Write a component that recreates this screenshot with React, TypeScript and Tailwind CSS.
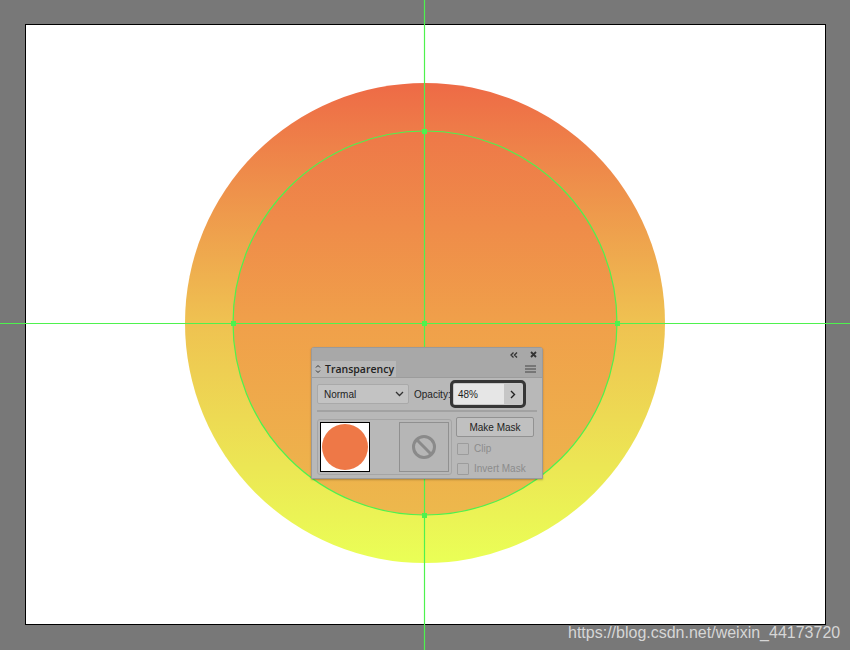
import React from "react";

const G = "#4ef24e";

function Canvas() {
  return (
    <svg className="absolute inset-0" width={850} height={650} viewBox="0 0 850 650">
      <defs>
        <linearGradient id="outer" x1="0" y1="0" x2="0" y2="1">
          <stop offset="0" stopColor="#ee6a46" />
          <stop offset="0.5" stopColor="#efc251" />
          <stop offset="1" stopColor="#eaff56" />
        </linearGradient>
        <linearGradient id="inner" x1="0" y1="0" x2="0" y2="1">
          <stop offset="0" stopColor="#ee7848" />
          <stop offset="0.5" stopColor="#f0a04a" />
          <stop offset="1" stopColor="#edb84c" />
        </linearGradient>
      </defs>
      <circle cx={425} cy={323} r={240} fill="url(#outer)" />
      <circle cx={425} cy={323} r={192} fill="url(#inner)" stroke={G} strokeWidth={1.2} />
      <line x1={424.5} y1={0} x2={424.5} y2={650} stroke={G} strokeWidth={1.2} />
      <line x1={0} y1={323.5} x2={850} y2={323.5} stroke={G} strokeWidth={1.2} />
      <rect x={422} y={321} width={5} height={5} fill={G} />
      <rect x={422} y={129} width={5} height={5} fill={G} />
      <rect x={422} y={513} width={5} height={5} fill={G} />
      <rect x={231} y={321} width={5} height={5} fill={G} />
      <rect x={615} y={321} width={5} height={5} fill={G} />
    </svg>
  );
}

function Panel() {
  const font = { fontFamily: '"Liberation Sans", Arial, sans-serif' };
  return (
    <div
      className="absolute left-[311px] top-[347px] w-[232px] bg-[#b8b8b8] border border-[#9a9a9a] rounded-t-[3px] text-[#1e1e1e] shadow-[0_1px_2px_rgba(0,0,0,0.25)]"
      style={font}
    >
      <div className="h-[13px] bg-[#a8a8a8] flex items-center justify-end gap-[12px] pr-[5px]">
        <svg width="8" height="6" viewBox="0 0 8 6">
          <path d="M3.5 0.5 L1 3 L3.5 5.5 M7 0.5 L4.5 3 L7 5.5" stroke="#333" strokeWidth="1.3" fill="none" />
        </svg>
        <svg width="7" height="7" viewBox="0 0 7 7">
          <path d="M1 1 L6 6 M6 1 L1 6" stroke="#333" strokeWidth="1.8" fill="none" />
        </svg>
      </div>
      <div className="h-[17px] flex bg-[#a8a8a8] border-b border-[#9c9c9c]">
        <div className="w-[84px] bg-[#b8b8b8] flex items-center pl-[3px] gap-[4px]">
          <svg width="6" height="10" viewBox="0 0 6 10">
            <path d="M1 3.5 L3 1.5 L5 3.5 M1 6.5 L3 8.5 L5 6.5" stroke="#333" strokeWidth="1" fill="none" />
          </svg>
          <span
            className="text-[10.5px] font-semibold text-[#222] leading-none"
            style={{ fontFamily: '"Open Sans", "Liberation Sans", sans-serif' }}
          >
            Transparency
          </span>
        </div>
        <div className="flex-1 flex items-center justify-end pr-[6px]">
          <svg width="11" height="8" viewBox="0 0 11 8">
            <path d="M0 1 H11 M0 4 H11 M0 7 H11" stroke="#444" strokeWidth="1" />
          </svg>
        </div>
      </div>
      <div className="px-[5px] pb-[3px]">
        <div className="flex items-center h-[28px] mt-[2px]">
          <div className="w-[92px] h-[20px] bg-[#c3c3c3] border border-[#a9a9a9] rounded-[2px] flex items-center justify-between pl-[6px] pr-[4px]">
            <span className="text-[10px]">Normal</span>
            <svg width="9" height="6" viewBox="0 0 9 6">
              <path d="M1 1 L4.5 4.5 L8 1" stroke="#333" strokeWidth="1.3" fill="none" />
            </svg>
          </div>
          <span className="text-[10px] ml-[5px] w-[36px] whitespace-nowrap">Opacity:</span>
          <div className="w-[76px] h-[28px] border-[3px] border-[#363636] rounded-[5px] flex p-[1px] bg-[#c8c8c8]">
            <div className="w-[50px] bg-[#e6e6e6] flex items-center pl-[4px] text-[10px]">48%</div>
            <div className="flex-1 flex items-center justify-center bg-[#c6c6c6]">
              <svg width="6" height="9" viewBox="0 0 6 9">
                <path d="M1 1 L4.5 4.5 L1 8" stroke="#222" strokeWidth="1.4" fill="none" />
              </svg>
            </div>
          </div>
        </div>
        <div className="mt-[2px] w-[220px] h-[2px] bg-[#a2a2a2]" />
        <div className="flex gap-[4px] mt-[5px]">
          <div className="w-[135px] h-[56px] mt-[2px] border border-[#a5a5a5] rounded-[3px] flex items-center pl-[2px]">
            <div className="w-[50px] h-[50px] bg-white border border-black flex items-center justify-center">
              <div className="w-[46px] h-[46px] rounded-full bg-[#ee7847]" />
            </div>
            <div className="w-[50px] h-[50px] ml-[29px] border border-[#909090] bg-[#b6b6b6] flex items-center justify-center">
              <svg width="26" height="26" viewBox="0 0 26 26">
                <circle cx="13" cy="13" r="10.5" stroke="#8a8a8a" strokeWidth="3" fill="none" />
                <path d="M5.8 5.8 L20.2 20.2" stroke="#8a8a8a" strokeWidth="3" />
              </svg>
            </div>
          </div>
          <div className="flex flex-col">
            <div className="w-[78px] h-[20px] bg-[#c0c0c0] border border-[#929292] rounded-[2px] flex items-center justify-center text-[10px] font-medium">
              Make Mask
            </div>
            <div className="flex items-center h-[12px] mt-[6px] ml-[1px] gap-[5px]">
              <div className="w-[12px] h-[12px] border border-[#9c9c9c] rounded-[1px]" />
              <span className="text-[10px] leading-[12px] text-[#8c8c8c]">Clip</span>
            </div>
            <div className="flex items-center h-[12px] mt-[8px] ml-[1px] gap-[5px]">
              <div className="w-[12px] h-[12px] border border-[#9c9c9c] rounded-[1px]" />
              <span className="text-[10px] leading-[12px] text-[#8c8c8c]">Invert Mask</span>
            </div>
          </div>
        </div>
      </div>
    </div>
  );
}

export default function App() {
  return (
    <div className="relative w-[850px] h-[650px] bg-[#787878] overflow-hidden pt-[24px] pl-[25px]">
      <div className="w-[801px] h-[601px] bg-white border border-black" />
      <Canvas />
      <Panel />
      <div
        className="absolute left-[568px] top-[621px] text-[16px] text-[#d6d6d6] whitespace-nowrap"
        style={{ fontFamily: '"Liberation Sans", Arial, sans-serif' }}
      >
        https://blog.csdn.net/weixin_44173720
      </div>
    </div>
  );
}
